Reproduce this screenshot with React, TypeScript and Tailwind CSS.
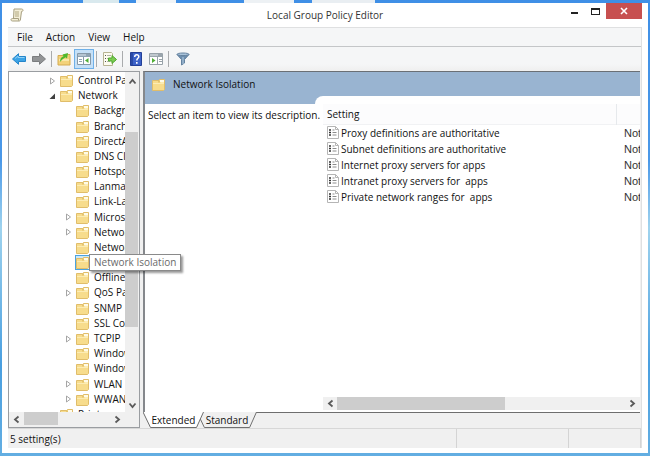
import { ReactNode } from "react"

type TreeNode = { label: string; level: number; arrow?: "open" | "closed"; selected?: boolean }

const tree: TreeNode[] = [
  { label: "Control Panel", level: 0, arrow: "closed" },
  { label: "Network", level: 0, arrow: "open" },
  { label: "Background", level: 1 },
  { label: "BranchCache", level: 1 },
  { label: "DirectAccess", level: 1 },
  { label: "DNS Client", level: 1 },
  { label: "Hotspot", level: 1 },
  { label: "Lanman", level: 1 },
  { label: "Link-Layer", level: 1 },
  { label: "Microsoft", level: 1, arrow: "closed" },
  { label: "Network", level: 1, arrow: "closed" },
  { label: "Network", level: 1 },
  { label: "Network Isolation", level: 1, selected: true },
  { label: "Offline Files", level: 1 },
  { label: "QoS Packet", level: 1, arrow: "closed" },
  { label: "SNMP", level: 1 },
  { label: "SSL Configuration", level: 1 },
  { label: "TCPIP", level: 1, arrow: "closed" },
  { label: "Windows", level: 1 },
  { label: "Windows", level: 1 },
  { label: "WLAN", level: 1, arrow: "closed" },
  { label: "WWAN", level: 1, arrow: "closed" },
  { label: "Printers", level: 0 },
]

const settings = [
  "Proxy definitions are authoritative",
  "Subnet definitions are authoritative",
  "Internet proxy servers for apps",
  "Intranet proxy servers for  apps",
  "Private network ranges for  apps",
]

function FolderIcon() {
  return (
    <svg width="13" height="13" viewBox="0 0 13 13" className="shrink-0" aria-hidden="true">
      <path d="M0.5 2.5 L0.5 12.5 L11.5 12.5 L12.5 11.5 L12.5 1.5 L7.5 1.5 L6.5 2.5 Z" fill="#f7dc8c" stroke="#e0bd6a" />
      <path d="M8 2h4v2h-4z" fill="#fffbe8" />
      <path d="M1 5h7l1-1h3v2H1z" fill="#fcecb4" />
      <path d="M7 2.500v2" stroke="#d3ac52" />
    </svg>
  )
}

function ScrollArrow({ dir, className }: { dir: "up" | "down" | "left" | "right"; className: string }) {
  const paths = {
    up: "M1.5 6.5 L4.5 3 L7.5 6.5",
    down: "M1.5 2.5 L4.5 6 L7.5 2.5",
    left: "M6.5 1.5 L3 4.5 L6.5 7.5",
    right: "M2.5 1.5 L6 4.5 L2.5 7.5",
  }
  return (
    <button aria-label={"Scroll " + dir} className={"flex shrink-0 items-center justify-center " + className}>
      <svg width="9" height="9" viewBox="0 0 9 9" fill="none" stroke="#5a5a5a" strokeWidth="1.800">
        <path d={paths[dir]} />
      </svg>
    </button>
  )
}

function ToolButton({ label, active, children }: { label: string; active?: boolean; children: ReactNode }) {
  return (
    <button
      aria-label={label}
      aria-pressed={active}
      className={
        "flex h-5 w-5 items-center justify-center " + (active ? "border border-[#6fb0e8] bg-[#c5e0f7]" : "")
      }
    >
      {children}
    </button>
  )
}

function Separator() {
  return <div className="mx-[2px] h-4 w-px bg-[#a9abad]" />
}

function Toolbar() {
  return (
    <div className="flex h-[23px] shrink-0 items-center bg-[linear-gradient(#f5f6f7_75%,#f0f0f0)] pl-px">
      <ToolButton label="Back">
        <svg width="14" height="12" viewBox="0 0 14 12">
          <path d="M0.5 6 L6.5 0.7 V3.5 H13.5 V8.5 H6.5 V11.3 Z" fill="#3ba3e6" stroke="#2585c9" />
          <path d="M3 5.5 L6 3 V4.5 H12.5" fill="none" stroke="#8ed0f7" />
        </svg>
      </ToolButton>
      <ToolButton label="Forward">
        <svg width="14" height="12" viewBox="0 0 14 12">
          <path d="M13.5 6 L7.5 0.7 V3.5 H0.5 V8.5 H7.5 V11.3 Z" fill="#929496" stroke="#7b7d7f" />
        </svg>
      </ToolButton>
      <Separator />
      <ToolButton label="Up one level">
        <svg width="14" height="14" viewBox="0 0 14 14">
          <path d="M1 3.500h5l1-1h6v10.500H1z" fill="#f3d27a" stroke="#d4ab50" />
          <path d="M2 7h10v2H2z" fill="#fae7a8" />
          <path d="M3 10 C3 6.500 4.500 5 6.500 4.300 L5.500 2.500 L11 1 L10 6.500 L8.500 5.300 C6.500 6.500 5.500 7.500 3 10 Z" fill="#4fb82c" />
        </svg>
      </ToolButton>
      <ToolButton label="Show or hide console tree" active>
        <svg width="14" height="12" viewBox="0 0 14 12">
          <path d="M0.500 0.500h13v11h-13z" fill="#fff" stroke="#8799a8" />
          <path d="M1 1h12v3H1z" fill="#8fa3b3" />
          <path d="M1 2h8" stroke="#dce6ee" />
          <path d="M6.500 4v7" stroke="#8799a8" />
          <path d="M2 6.500h3M2 8.500h3" stroke="#8fa3b3" />
          <path d="M11.500 5 V10 L8 7.500 Z" fill="#4fae35" />
        </svg>
      </ToolButton>
      <Separator />
      <ToolButton label="Export list">
        <svg width="15" height="14" viewBox="0 0 15 14">
          <path d="M1.500 0.500h8l1 1v12h-9z" fill="#fdfbef" stroke="#b8b493" />
          <path d="M3 3.500h1M3 6.500h1M3 9.500h1" stroke="#555" />
          <path d="M5 3.500h4M5 6.500h3M5 9.500h3" stroke="#b3b3a8" />
          <path d="M6.500 6 H10 V3.500 L14.500 7.500 L10 11.500 V9 H6.500 Z" fill="#7bcb52" stroke="#50a82e" />
        </svg>
      </ToolButton>
      <div className="w-px" />
      <Separator />
      <div className="w-px" />
      <ToolButton label="Help">
        <svg width="12" height="14" viewBox="0 0 12 14">
          <path d="M0.500 0.500h11v13h-11z" fill="#3c62c8" stroke="#233f97" />
          <path d="M1 1h2v12H1z" fill="#294aa6" />
          <path d="M4.700 5 C4.700 2 9 2.200 8.800 4.800 C8.700 6.300 6.800 6.300 6.800 8.500" fill="none" stroke="#fff" strokeWidth="1.500" />
          <path d="M6 10h1.600v1.700H6z" fill="#fff" />
        </svg>
      </ToolButton>
      <ToolButton label="Show or hide action pane">
        <svg width="14" height="12" viewBox="0 0 14 12">
          <path d="M0.500 0.500h13v11h-13z" fill="#fff" stroke="#98a2a9" />
          <path d="M1 1h12v3H1z" fill="#9aa5ad" />
          <path d="M1 2h8" stroke="#e6ebee" />
          <path d="M8.500 4v7" stroke="#98a2a9" />
          <path d="M10 6.500h3M10 8.500h3" stroke="#98a2a9" />
          <path d="M3 5 V10 L6.500 7.500 Z" fill="#4fae35" />
        </svg>
      </ToolButton>
      <Separator />
      <div className="w-[2px]" />
      <ToolButton label="Filter">
        <svg width="14" height="14" viewBox="0 0 14 14">
          <path d="M1 2.500 L5.500 7.500 V13 L8.500 11 V7.500 L13 2.500 Z" fill="#6d8eae" stroke="#64829f" />
          <path d="M7 5v7" stroke="#b5cde2" />
          <ellipse cx="7" cy="2.300" rx="6" ry="1.300" fill="#a9c3da" stroke="#64829f" />
        </svg>
      </ToolButton>
    </div>
  )
}

function TreeRow({ node }: { node: TreeNode }) {
  return (
    <li className={"flex min-h-0 flex-1 items-center whitespace-nowrap " + (node.level ? "pl-[56px]" : "pl-[40px]")}>
      <span className="flex w-[10px] shrink-0">
        {node.arrow === "closed" && (
          <svg width="7" height="8" viewBox="0 0 7 8">
            <path d="M1.500 1 L5.500 4 L1.500 7 Z" fill="#fff" stroke="#a6a6a6" />
          </svg>
        )}
        {node.arrow === "open" && (
          <svg width="7" height="8" viewBox="0 0 7 8">
            <path d="M6 1.500 V7 H0.500 Z" fill="#404040" />
          </svg>
        )}
      </span>
      <span className={"flex border " + (node.selected ? "border-[#4aa3df] bg-[#cde8f7]" : "border-transparent")}>
        <FolderIcon />
      </span>
      <span className="ml-1">{node.label}</span>
    </li>
  )
}

function TreePanel() {
  return (
    <div className="relative flex w-[132px] shrink-0 flex-col border border-[#9a9da1] bg-white">
      <div className="flex min-h-0 flex-1">
        <div className="min-w-0 flex-1 overflow-hidden">
          <ul className="flex h-[350px] flex-col pt-px">
            {tree.map((node, i) => (
              <TreeRow key={i} node={node} />
            ))}
          </ul>
        </div>
        <div className="flex w-[14px] shrink-0 flex-col bg-[#f0f0f0]">
          <ScrollArrow dir="up" className="h-[18px] w-full" />
          <div className="h-[42px]" />
          <div className="h-[195px] w-[13px] bg-[#cdcdcd]" />
          <div className="flex-1" />
          <ScrollArrow dir="down" className="h-[14px] w-full" />
        </div>
      </div>
      <div className="flex h-[15px] shrink-0 bg-[#f0f0f0]">
        <ScrollArrow dir="left" className="w-[15px]" />
        <div className="h-[13px] w-[34px] bg-[#cdcdcd]" />
        <div className="flex-1" />
        <ScrollArrow dir="right" className="mr-[14px] w-[15px]" />
      </div>
      <div
        role="tooltip"
        className="absolute left-[80px] top-[182px] z-20 flex h-[17px] items-center whitespace-nowrap border border-[#8a8a8a] bg-white px-1 text-[#6a6a6a] shadow-[2px_2px_2px_#00000066]"
      >
        Network Isolation
      </div>
    </div>
  )
}

function SettingIcon() {
  return (
    <svg width="12" height="13" viewBox="0 0 12 13" className="shrink-0" aria-hidden="true">
      <path d="M0.500 0.500h8l3 3v9h-11z" fill="#fff" stroke="#b5b5b5" />
      <path d="M8.500 0.500v3h3" fill="none" stroke="#b5b5b5" />
      <path d="M2 4h2M2 6.500h2M2 9h2" stroke="#333" strokeWidth="1.500" />
      <path d="M5.500 4h2M5.500 6.500h4M5.500 9h4" stroke="#8c8c8c" />
    </svg>
  )
}

function SettingsTable() {
  return (
    <table className="w-full table-fixed border-collapse text-left">
      <thead>
        <tr className="h-5 border-b border-[#f1f2f4] bg-[#fcfcfd]">
          <th className="border-r border-[#e6e9ec] p-0 pl-1 pt-px font-normal">Setting</th>
          <th className="w-6 p-0" aria-label="State" />
        </tr>
      </thead>
      <tbody>
        {settings.map((name) => (
          <tr key={name} className="h-4 leading-4">
            <td className="p-0 pl-1">
              <span className="flex items-center gap-[2px] whitespace-pre">
                <SettingIcon />
                {name}
              </span>
            </td>
            <td className="overflow-hidden whitespace-nowrap p-0 pl-2 font-['Liberation_Sans',sans-serif] text-[11px] text-[#333]">
              Not configured
            </td>
          </tr>
        ))}
      </tbody>
    </table>
  )
}

function TabShape({ fill }: { fill: string }) {
  return (
    <svg viewBox="0 0 61 16" preserveAspectRatio="none" className="absolute inset-0 h-full w-full" aria-hidden="true">
      <path d="M0 0 L7.500 15.500 H53.500 L60.500 0" fill={fill} stroke="#6e6e6e" />
    </svg>
  )
}

function ResultPane() {
  return (
    <div className="flex min-w-0 flex-1 flex-col">
      <div className="flex min-h-0 flex-1 flex-col border-l-2 border-t border-l-[#85888c] border-t-[#6a6f75] bg-[#99b4d1]">
        <div className="flex h-6 shrink-0 items-center gap-2 pl-[7px]">
          <FolderIcon />
          <h2>Network Isolation</h2>
        </div>
        <div className="flex min-h-0 flex-1">
          <div className="flex w-[170px] shrink-0 pt-2">
            <p className="relative z-10 flex-1 whitespace-nowrap bg-white pl-[3px] pt-[3px] leading-4">
              Select an item to view its description.
            </p>
          </div>
          <div className="flex min-w-0 flex-1 flex-col overflow-hidden rounded-tl-lg bg-white pb-[2px] pl-2 pt-2">
            <SettingsTable />
            <div className="flex-1" />
            <div className="flex h-[13px] shrink-0 bg-[#f0f0f0]">
              <ScrollArrow dir="left" className="w-[14px]" />
              <div className="w-[168px] bg-[#cdcdcd]" />
              <div className="flex-1" />
              <ScrollArrow dir="right" className="w-[16px]" />
            </div>
          </div>
        </div>
      </div>
      <div className="flex h-4 shrink-0 border-t border-[#6e6e6e]">
        <button className="relative z-10 -mt-px h-4 w-[61px]">
          <TabShape fill="#ffffff" />
          <span className="relative">Extended</span>
        </button>
        <button className="relative -ml-[7px] -mt-px h-4 w-[60px]">
          <TabShape fill="#f0f0f0" />
          <span className="relative">Standard</span>
        </button>
      </div>
    </div>
  )
}

function TitleBar() {
  return (
    <header className="grid h-6 shrink-0 grid-cols-[1fr_auto_1fr] items-center">
      <svg width="14" height="14" viewBox="0 0 14 14" className="ml-2" aria-hidden="true">
        <path d="M4 1 H11.500 C13.500 1 13.500 3.500 11.500 3.500 L10.500 11 C10.500 13 9.500 13 9 13 H2.500 C0.500 13 0.500 10.500 2.500 10.500 H3.500 Z" fill="#f4efd8" stroke="#a79f80" />
        <path d="M5 4h4M5 6h4M5 8h4" stroke="#b1a780" />
        <path d="M3 10.500h5.500v2" fill="none" stroke="#a79f80" />
      </svg>
      <h1 className="text-[#333]">Local Group Policy Editor</h1>
      <div className="mr-[6px] flex justify-end self-start">
        <button aria-label="Minimize" className="flex h-4 w-5 items-center justify-center">
          <span className="mt-1 h-[2px] w-[7px] bg-[#222]" />
        </button>
        <button aria-label="Maximize" className="flex h-4 w-[22px] items-center justify-center">
          <span className="h-[7px] w-[9px] border border-t-2 border-[#222]" />
        </button>
        <button aria-label="Close" className="flex h-4 w-9 items-center justify-center bg-[#c75050]">
          <svg width="8" height="8" viewBox="0 0 8 8" stroke="#fff" strokeWidth="1.600">
            <path d="M1 1 L7 7 M7 1 L1 7" />
          </svg>
        </button>
      </div>
    </header>
  )
}

export default function App() {
  return (
    <div className="flex h-screen w-full flex-col bg-[linear-gradient(#3f8fe6,#4a98e8_35%,#9fd3ee_50%,#4a9fe0_80%,#63aee2)] px-[2px] pb-[3px] font-['Open_Sans','Noto_Sans',sans-serif] text-[10px] text-[#111]">
      <div className="flex h-[3px] shrink-0">
        <div className="ml-[81px] w-[36px] bg-[#d9e9ee]" />
        <div className="ml-[17px] w-[40px] bg-[#f1f4f6]" />
        <div className="ml-[68px] w-[50px] bg-[#edf1f4]" />
        <div className="ml-[18px] w-[63px] bg-[#e9eef2]" />
      </div>
      <div className="flex min-h-0 flex-1 flex-col bg-white">
        <TitleBar />
        <div className="mx-[6px] mb-[5px] flex min-h-0 flex-1 flex-col border-r border-t border-[#dfe0e1] bg-[#f0f0f0]">
          <nav className="flex h-[19px] shrink-0 items-center gap-[13px] border-b border-[#c4c6c8] bg-[#f5f6f7] pl-[9px]">
            <button>File</button>
            <button>Action</button>
            <button>View</button>
            <button>Help</button>
          </nav>
          <Toolbar />
          <main className="flex min-h-0 flex-1 gap-[3px] pr-px pt-px">
            <TreePanel />
            <ResultPane />
          </main>
          <footer className="flex h-5 shrink-0 items-center border-t border-[#d7d7d7] leading-none">
            <span className="flex-1 pl-[2px]">5 setting(s)</span>
            <div className="h-full w-[112px] border-l border-[#d4d4d4]" />
            <div className="h-full w-[73px] border-x border-[#d4d4d4]" />
          </footer>
        </div>
      </div>
    </div>
  )
}
